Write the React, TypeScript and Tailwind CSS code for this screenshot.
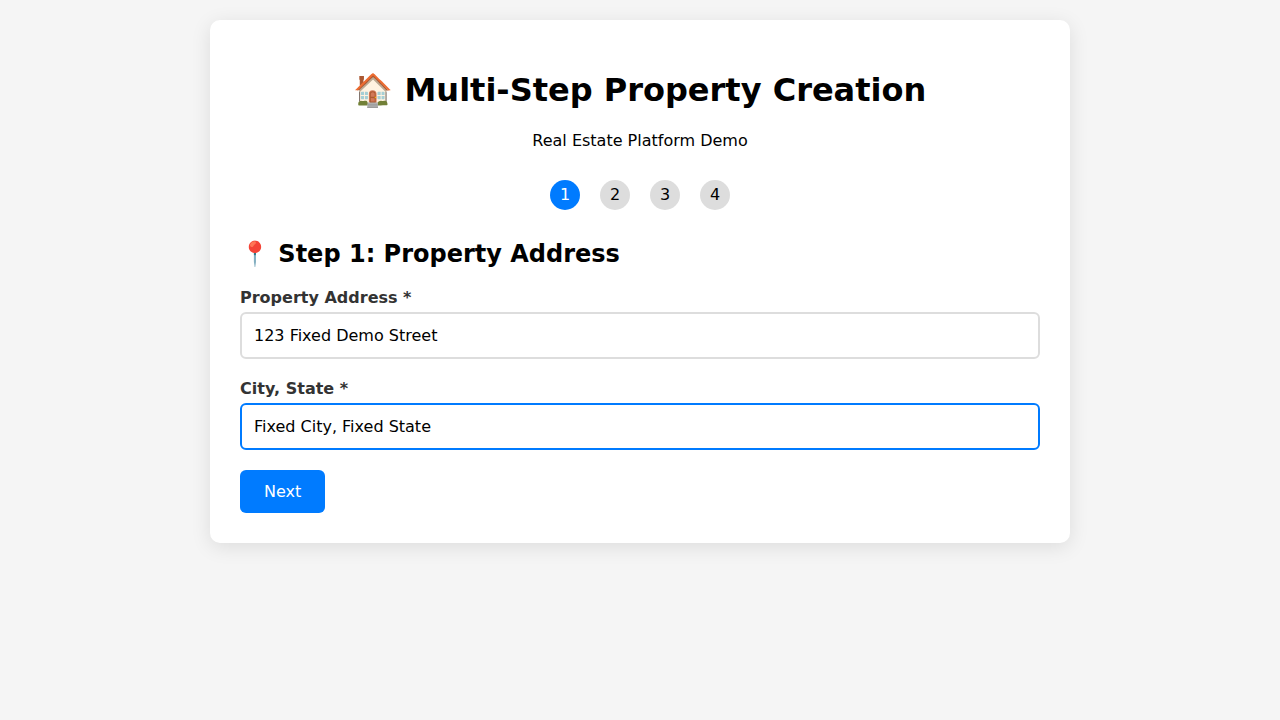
import { useState } from 'react';

const steps = [1, 2, 3, 4];

function Field({ id, label, initial, autoFocus = false }: { id: string; label: string; initial: string; autoFocus?: boolean }) {
  const [value, setValue] = useState(initial);
  return (
    <div className="mb-5">
      <label htmlFor={id} className="mb-[5px] block h-[19px] font-bold leading-[19px] text-[#333]">
        {label}
      </label>
      <input
        id={id}
        type="text"
        autoFocus={autoFocus}
        value={value}
        onChange={(e) => setValue(e.target.value)}
        className="block h-[47px] w-full rounded-[6px] border-2 border-[#ddd] bg-white p-3 text-base leading-[19px] text-black caret-transparent outline-none focus:border-[#007bff]"
      />
    </div>
  );
}

export default function App() {
  return (
    <div className="min-h-screen bg-[#f5f5f5] p-5 font-['DejaVu_Sans',sans-serif] text-base leading-[19px] text-black">
      <main className="mx-auto h-[523px] w-[860px] rounded-[10px] bg-white px-[30px] pt-[51px] shadow-[0_4px_20px_rgba(0,0,0,0.1)]">
        <header className="text-center">
          <h1 className="h-[38px] pr-[0.4px] text-[32px] font-bold leading-[38px]">🏠 Multi-Step Property Creation</h1>
          <p className="mt-[22px]">Real Estate Platform Demo</p>
        </header>
        <nav className="mt-[30px] flex justify-center gap-5">
          {steps.map((step) => (
            <span
              key={step}
              className={
                step === 1
                  ? 'flex size-[30px] items-center justify-center rounded-full bg-[#007bff] pb-px text-white'
                  : 'flex size-[30px] items-center justify-center rounded-full bg-[#ddd] pb-px'
              }
            >
              {step}
            </span>
          ))}
        </nav>
        <h2 className="mb-5 mt-[30px] h-7 text-2xl font-bold leading-7">📍 Step 1: Property Address</h2>
        <Field id="address" label="Property Address *" initial="123 Fixed Demo Street" />
        <Field id="city" label="City, State *" initial="Fixed City, Fixed State" autoFocus />
        <button type="button" className="block h-[43px] rounded-[6px] bg-[#007bff] px-6 text-white">
          Next
        </button>
      </main>
    </div>
  );
}
